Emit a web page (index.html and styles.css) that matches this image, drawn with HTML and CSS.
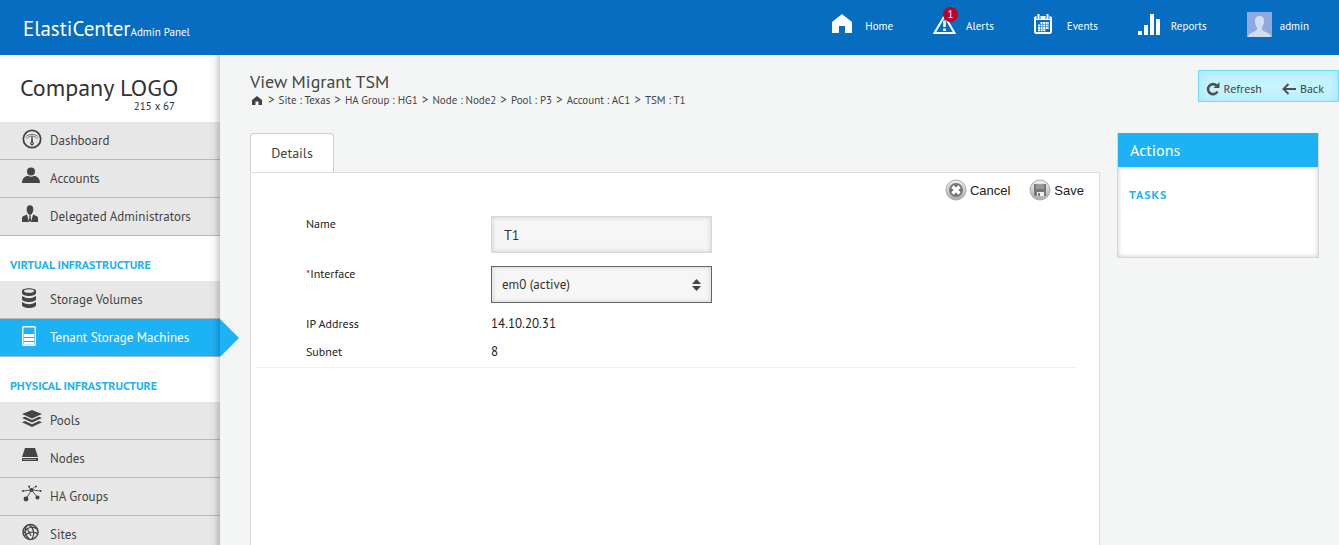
FILE: index.html
```html
<!DOCTYPE html>
<html lang="en">
<head>
<meta charset="utf-8">
<title>ElastiCenter Admin Panel</title>
<link rel="stylesheet" href="styles.css">
</head>
<body>
<header class="topbar">
  <div class="brand"><span class="brand-name">ElastiCenter</span><span class="brand-sub">Admin Panel</span></div>
  <nav class="topnav">
    <a href="#"><span class="topicon"><svg width="20" height="20" viewBox="0 0 20 20"><path fill="#fff" d="M10 0 20 8V19H13V12H7V19H0V8Z"/></svg></span>Home</a>
    <a href="#"><span class="topicon"><svg width="23" height="21" viewBox="0 0 23 21"><path fill="none" stroke="#fff" stroke-width="2" d="M11.500 2 21.500 19H1.500Z"/><path stroke="#fff" stroke-width="2.600" d="M11.500 6.500V13M11.500 14.500V17"/></svg><span class="badge">1</span></span>Alerts</a>
    <a href="#"><span class="topicon"><svg width="18" height="20" viewBox="0 0 18 20"><rect x="1" y="3" width="16" height="16" rx="1.500" fill="none" stroke="#fff" stroke-width="2"/><path fill="#fff" d="M1 3H17V6H1Z"/><path stroke="#066dc0" stroke-width="4" d="M4.500 0V5M13.500 0V5"/><path stroke="#fff" stroke-width="2" d="M4.500 0V5M13.500 0V5"/><path stroke="#fff" stroke-width="2" stroke-dasharray="2 .6" d="M6.500 9H15M4 11.500H15M4 14H15M4 16.300H12"/></svg></span>Events</a>
    <a href="#"><span class="topicon"><svg width="22" height="21" viewBox="0 0 22 21"><path fill="#fff" d="M0 17H4V21H0ZM6 11H10V21H6ZM12 0H16V21H12ZM18 5H22V21H18Z"/></svg></span>Reports</a>
    <a href="#"><span class="topicon"><svg width="25" height="25" viewBox="0 0 25 25"><path fill="#8faadc" d="M0 0H25V25H0Z"/><path fill="#d0dcf1" d="M12.500 4C16 4 17.500 6.500 17 10 16.800 13 15.500 14.500 15 16 14.800 19 18 19.500 21 21 23 22 24 23 24 25H1C1 23 2 22 4 21 7 19.500 10.200 19 10 16 9.500 14.500 8.200 13 8 10 7.500 6.500 9 4 12.500 4Z"/></svg></span>admin</a>
  </nav>
</header>
<div class="layout">
  <aside class="sidebar">
    <div class="logo"><span class="logo-name">Company LOGO</span><span class="logo-size">215 x 67</span></div>
    <nav class="menu">
      <a href="#"><span class="icon"><svg width="20" height="20" viewBox="0 0 20 20"><circle cx="10" cy="10" r="8.700" fill="none" stroke="#444" stroke-width="1.800"/><path fill="none" stroke="#777" stroke-width="1" d="M3.500 8C7 4.500 13 4.500 16.500 8M4.500 10C6 8 8 7 10 7S14 8 15.500 10"/><path fill="#444" d="M9.500 7H10.500L11 13A1.800 1.800 0 1 1 9 13Z"/><circle cx="10" cy="14.500" r=".7" fill="#e7e7e7"/></svg></span>Dashboard</a>
      <a href="#"><span class="icon"><svg width="18" height="20" viewBox="0 0 18 20"><circle cx="9" cy="4.500" r="4" fill="#444"/><path fill="#444" d="M0 16C0 11 4 8.500 6 9Q9 10.500 12 9C14 8.500 18 11 18 16Z"/></svg></span>Accounts</a>
      <a href="#"><span class="icon"><svg width="16" height="20" viewBox="0 0 16 20"><ellipse cx="8" cy="4.500" rx="3.300" ry="4.300" fill="#444"/><path fill="#444" d="M0 17V13C0 11 3 10.500 5 9.500L7 17ZM16 17V13C16 11 13 10.500 11 9.500L9 17ZM7 10.500H9L8.600 12 9.300 16.500H6.700L7.400 12ZM6 6H10V9L8 10 6 9Z"/></svg></span>Delegated Administrators</a>
    </nav>
    <h2 class="section">VIRTUAL INFRASTRUCTURE</h2>
    <nav class="menu">
      <a href="#"><span class="icon"><svg width="14" height="20" viewBox="0 0 14 20"><path fill="#444" d="M0 3C0-.8 14-.8 14 3V5C14 9 0 9 0 5ZM0 8Q7 12.500 14 8V11C14 15 0 15 0 11ZM0 14Q7 18.500 14 14V17C14 21 0 21 0 17Z"/><ellipse cx="7" cy="3" rx="5" ry="1.800" fill="#e7e7e7"/></svg></span>Storage Volumes</a>
      <a href="#" class="active"><span class="icon"><svg width="14" height="20" viewBox="0 0 14 20"><rect x=".7" y=".7" width="12.600" height="18.600" rx="1" fill="none" stroke="#fff" stroke-width="1.400"/><path fill="#fff" d="M2 8H12V11H2ZM2 12H12V15H2ZM2 16H12V18.500H2Z"/></svg></span>Tenant Storage Machines</a>
    </nav>
    <h2 class="section">PHYSICAL INFRASTRUCTURE</h2>
    <nav class="menu">
      <a href="#"><span class="icon"><svg width="20" height="20" viewBox="0 0 20 20"><path fill="#444" d="M10 1 20 5 10 9.500 0 5ZM0 9 3 7.800 10 11 17 7.800 20 9 10 13.500ZM0 13.200 3 12 10 15.200 17 12 20 13.200 10 18Z"/></svg></span>Pools</a>
      <a href="#"><span class="icon"><svg width="16" height="20" viewBox="0 0 16 20"><path fill="#444" d="M3 1H13L16 10H0ZM0 11H16V14H0Z"/><path stroke="#aaa" stroke-width=".8" d="M1 12.500H14"/></svg></span>Nodes</a>
      <a href="#"><span class="icon"><svg width="20" height="20" viewBox="0 0 20 20"><path stroke="#555" fill="none" d="M1 6 9.500 5 19 6M7 2 9.500 5 13 1.500M4 14 9.500 5 15.500 12.500"/><g fill="#444"><circle cx="9.500" cy="5" r="2"/><circle cx="4" cy="14" r="2.400"/><circle cx="15.500" cy="12.500" r="2"/><circle cx="1" cy="6" r="1"/><circle cx="18.700" cy="6" r="1"/><circle cx="7" cy="1.500" r="1"/><circle cx="14" cy="1.500" r="1"/></g></svg></span>HA Groups</a>
      <a href="#"><span class="icon"><svg width="18" height="20" viewBox="0 0 18 20"><g fill="none" stroke="#444" stroke-width="1.500"><circle cx="8.500" cy="9" r="7.500"/><path stroke-width="1.200" d="M5 2.500C2 7 3 12 7 16M7 2C12 5 13 11 10 16M2 10C6 3 11 3 15 6M2 13C8 8 12 8 16 11M5 5 9 13"/></g></svg></span>Sites</a>
    </nav>
  </aside>
  <main class="main">
    <div class="pagehead">
      <div>
        <h1>View Migrant TSM</h1>
        <nav class="crumbs"><a href="#" aria-label="Home"><svg width="10" height="9" viewBox="0 0 10 9"><path fill="#444" d="M5 0 10 4V9H6.500V5.500H3.500V9H0V4Z"/></svg></a><span>&gt;</span><a href="#">Site : Texas</a><span>&gt;</span><a href="#">HA Group : HG1</a><span>&gt;</span><a href="#">Node : Node2</a><span>&gt;</span><a href="#">Pool : P3</a><span>&gt;</span><a href="#">Account : AC1</a><span>&gt;</span><a href="#">TSM : T1</a></nav>
      </div>
      <div class="quick">
        <button type="button"><svg width="14" height="14" viewBox="0 0 14 14"><path fill="none" stroke="#505050" stroke-width="2.600" d="M10.500 3.500A5 5 0 1 0 11.500 9.500"/><path fill="#505050" d="M13.500 0V6H7.500Z"/></svg>Refresh</button>
        <button type="button"><svg width="14" height="12" viewBox="0 0 14 12"><path fill="none" stroke="#505050" stroke-width="2" d="M14 6H1.500M6.500 1 1.500 6 6.500 11"/></svg>Back</button>
      </div>
    </div>
    <div class="columns">
      <section class="details">
        <button type="button" class="tab">Details</button>
        <form class="panel">
          <div class="toolbar">
            <button type="button"><svg width="24" height="24" viewBox="0 0 24 24"><defs><linearGradient id="ring" x2="0" y2="1"><stop offset="0" stop-color="#f2f2f2"/><stop offset="1" stop-color="#aaa"/></linearGradient></defs><circle cx="12" cy="12" r="10" fill="url(#ring)" stroke="#aaa"/><circle cx="12" cy="12" r="7" fill="#777"/><path stroke="#fff" stroke-width="3.200" d="M8.500 8.500 15.500 15.500M15.500 8.500 8.500 15.500"/></svg>Cancel</button>
            <button type="button"><svg width="24" height="24" viewBox="0 0 24 24"><circle cx="12" cy="12" r="10" fill="url(#ring)" stroke="#aaa"/><path fill="#777" d="M6 6H18V18H7L6 17Z"/><path fill="#999" d="M8 6H16V11H8Z"/><path fill="#eee" d="M9 14H16V18H9Z"/><path fill="#777" d="M10 15H12V18H10Z"/></svg>Save</button>
          </div>
          <div class="fields">
            <label for="name">Name</label>
            <input id="name" type="text" value="T1">
            <label for="iface"><span class="required">*</span>Interface</label>
            <div class="selectbox"><select id="iface"><option>em0 (active)</option></select><svg class="arrows" width="9" height="12" viewBox="0 0 9 12"><path fill="#444" d="M4.500 0 9 5H0ZM0 7H9L4.500 12Z"/></svg></div>
            <span class="label">IP Address</span><span class="value">14.10.20.31</span>
            <span class="label">Subnet</span><span class="value">8</span>
          </div>
        </form>
      </section>
      <aside class="actions">
        <h2>Actions</h2>
        <div class="actions-body"><h3>TASKS</h3></div>
      </aside>
    </div>
  </main>
</div>
</body>
</html>
```
FILE: styles.css
```css
* { box-sizing: border-box; }
body {
  margin: 0;
  min-height: 100vh;
  display: flex;
  flex-direction: column;
  background: #f4f6f6;
  color: #444;
  font-family: "PT Sans", "Noto Sans", sans-serif;
  font-size: 13px;
}
a { color: inherit; text-decoration: none; }
h1, h2, h3 { margin: 0; font-weight: 400; }
button { margin: 0; padding: 0; border: 0; background: none; color: inherit; font: inherit; }
svg { display: block; flex: none; }

.topbar {
  height: 55px;
  padding: 0 30px 0 23px;
  display: flex;
  justify-content: space-between;
  background: #066dc0;
  color: #fff;
}
.brand { padding-top: 16px; line-height: 26px; white-space: nowrap; }
.brand-name { font-size: 21px; }
.brand-sub { font-size: 11px; }
.topnav { display: flex; gap: 40px; height: 51px; font-size: 11px; }
.topnav a { display: flex; align-items: center; }
.topicon { position: relative; width: 33px; padding-bottom: 3px; }
.badge {
  position: absolute;
  left: 10px;
  top: -7px;
  width: 15px;
  height: 15px;
  border-radius: 50%;
  background: #c00026;
  font-size: 11px;
  line-height: 15px;
  text-align: center;
}

.layout { flex: 1; display: flex; }
.sidebar { position: relative; width: 220px; flex: none; background: #fff; }
.sidebar::after {
  content: "";
  position: absolute;
  top: 0;
  right: 0;
  bottom: 0;
  width: 12px;
  background: linear-gradient(to right, rgba(0, 0, 0, 0), rgba(0, 0, 0, .03) 50%, rgba(0, 0, 0, .18));
  pointer-events: none;
}
.logo {
  height: 67px;
  padding: 20px 0 0 20px;
  display: flex;
  flex-direction: column;
  color: #333;
}
.logo-name { font-size: 24px; line-height: 26px; }
.logo-size { width: 155px; font-size: 11px; line-height: 10px; text-align: right; }
.menu a {
  position: relative;
  display: flex;
  align-items: center;
  height: 38px;
  padding: 0 0 1px 22px;
  border-bottom: 1px solid #b8b8b8;
  background: #e7e7e7;
}
.icon { width: 28px; height: 22px; }
.menu .active { background: #1db2f5; color: #fff; }
.active::after {
  content: "";
  position: absolute;
  left: 100%;
  top: 0;
  width: 19px;
  height: 38px;
  background: #1db2f5;
  clip-path: polygon(0 0, 100% 50%, 0 100%);
}
.section {
  height: 45px;
  padding: 11px 10px 0;
  display: flex;
  align-items: center;
  color: #1db2f5;
  font-size: 12px;
  font-weight: 700;
}

.main { flex: 1; min-width: 0; padding: 15px 0 0 30px; display: flex; flex-direction: column; }
.pagehead { height: 63px; display: flex; justify-content: space-between; align-items: flex-start; }
.pagehead h1 { font-size: 18px; line-height: 24px; }
.crumbs { display: flex; align-items: center; gap: 4px; line-height: 12px; font-size: 11px; }
.crumbs span { font-size: 13px; }
.crumbs a:first-child { padding: 0 2px; }
.quick {
  height: 32px;
  padding: 5px 14px 0 7px;
  display: flex;
  align-items: center;
  gap: 20px;
  border: 1px solid #6fdcfc;
  background: #c5f3fe;
  box-shadow: inset 0 0 12px #a0e6fa;
  font-size: 12px;
}
.quick button { display: flex; align-items: center; gap: 4px; }

.columns { flex: 1; display: flex; gap: 17px; padding-right: 20px; }
.details { flex: 1; min-width: 0; display: flex; flex-direction: column; align-items: flex-start; }
.tab {
  width: 84px;
  height: 39px;
  border: 1px solid #ccc;
  border-bottom: 0;
  border-radius: 4px 4px 0 0;
  background: #fff;
  font-size: 14px;
}
.panel { flex: 1; width: 100%; border: 1px solid #ddd; border-bottom: 0; background: #fff; }
.toolbar {
  padding: 5px 15px 0;
  display: flex;
  justify-content: flex-end;
  gap: 18px;
  color: #222;
  font-family: "Liberation Sans", Arial, sans-serif;
  font-size: 13px;
}
.toolbar button { display: flex; align-items: center; gap: 2px; }
.fields {
  margin: 0 23px 0 5px;
  padding: 14px 0 0 50px;
  display: grid;
  grid-template-columns: 185px 221px;
  grid-template-rows: 50px 50px 28px 23px;
  border-bottom: 1px solid #f0f0f0;
  color: #222;
  font-size: 12px;
  line-height: 16px;
}
.required { color: #f00; }
.fields input, .fields select {
  width: 100%;
  height: 37px;
  margin: 0;
  border: 1px solid #d8d8d8;
  border-radius: 0;
  background: #f6f6f6;
  box-shadow: inset 0 0 5px #ccc;
  color: #333;
  font-family: inherit;
  font-size: 14px;
}
.fields input { padding: 0 12px; }
.fields select {
  appearance: none;
  padding: 0 10px;
  border-color: #666;
  font-size: 13px;
}
.value { font-size: 13px; }
.selectbox { position: relative; }
.arrows { position: absolute; right: 11px; top: 13px; pointer-events: none; }
.actions {
  width: 202px;
  align-self: flex-start;
  border: 1px solid #d8d8d8;
  border-top: 0;
  background: #fff;
}
.actions h2 { padding: 0 12px; background: #1db2f5; color: #fff; font-size: 16px; line-height: 34px; }
.actions-body { min-height: 90px; padding: 20px 11px; box-shadow: inset 0 0 5px #ccc; }
.actions h3 { color: #1db2f5; font-size: 12px; font-weight: 700; line-height: 16px; letter-spacing: 1px; }
```
